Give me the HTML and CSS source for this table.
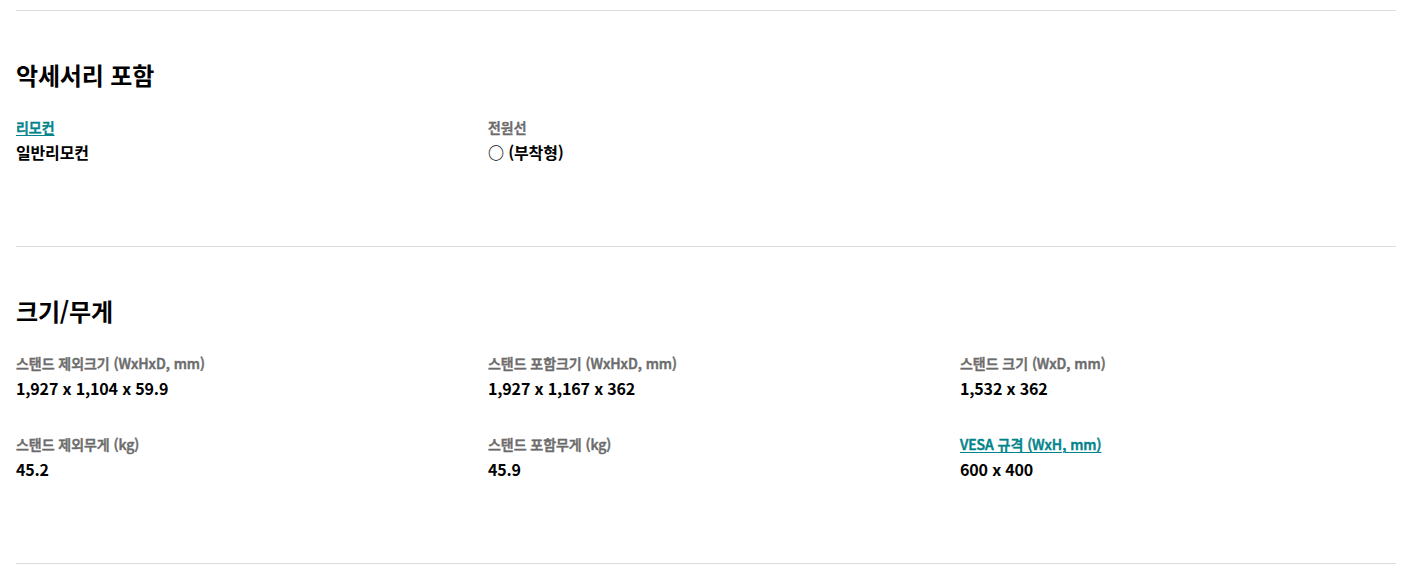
FILE: index.html
```html
<!DOCTYPE html>
<html lang="ko">
<head>
<meta charset="utf-8">
<link rel="stylesheet" href="styles.css">
</head>
<body>
<div class="page">
  <section class="spec">
    <h2 class="spec-title">악세서리 포함</h2>
    <div class="spec-grid">
      <div class="item">
        <div class="label link">리모컨</div>
        <div class="value">일반리모컨</div>
      </div>
      <div class="item">
        <div class="label">전원선</div>
        <div class="value">○ (부착형)</div>
      </div>
    </div>
  </section>
  <section class="spec">
    <h2 class="spec-title">크기/무게</h2>
    <div class="spec-grid">
      <div class="item">
        <div class="label">스탠드 제외크기 (WxHxD, mm)</div>
        <div class="value">1,927 x 1,104 x 59.9</div>
      </div>
      <div class="item">
        <div class="label">스탠드 포함크기 (WxHxD, mm)</div>
        <div class="value">1,927 x 1,167 x 362</div>
      </div>
      <div class="item">
        <div class="label">스탠드 크기 (WxD, mm)</div>
        <div class="value">1,532 x 362</div>
      </div>
      <div class="item">
        <div class="label">스탠드 제외무게 (kg)</div>
        <div class="value">45.2</div>
      </div>
      <div class="item">
        <div class="label">스탠드 포함무게 (kg)</div>
        <div class="value">45.9</div>
      </div>
      <div class="item">
        <div class="label link">VESA 규격 (WxH, mm)</div>
        <div class="value">600 x 400</div>
      </div>
    </div>
  </section>
  <div class="end-rule"></div>
</div>
</body>
</html>
```
FILE: styles.css
```css
* { box-sizing: border-box; }
html, body { margin: 0; padding: 0; background: #fff; }
body {
  font-family: "Noto Sans CJK KR", "Noto Sans", sans-serif;
  color: #000;
  letter-spacing: -0.01em;
}
.page {
  padding: 10px 13px 0 16px;
}
.spec {
  border-top: 1px solid #dcdcdc;
  padding: 47px 0 82px;
}
.spec-title {
  margin: 0 0 25px;
  font-size: 24px;
  line-height: 34px;
  font-weight: 700;
}
.spec-grid {
  display: grid;
  grid-template-columns: repeat(3, 1fr);
  column-gap: 36px;
  row-gap: 34px;
}
.item {
  display: flex;
  flex-direction: column;
  gap: 3px;
}
.label {
  font-size: 14px;
  line-height: 20px;
  font-weight: 500;
  letter-spacing: -0.05px;
  color: #6b6b6b;
  -webkit-text-stroke: 0.5px currentColor;
}
.label.link {
  color: #00838a;
  text-decoration: underline;
  text-decoration-thickness: 1px;
  text-underline-offset: 2px;
}
.value {
  font-size: 16px;
  line-height: 24px;
  font-weight: 700;
}
.end-rule {
  border-top: 1px solid #dcdcdc;
}
```
